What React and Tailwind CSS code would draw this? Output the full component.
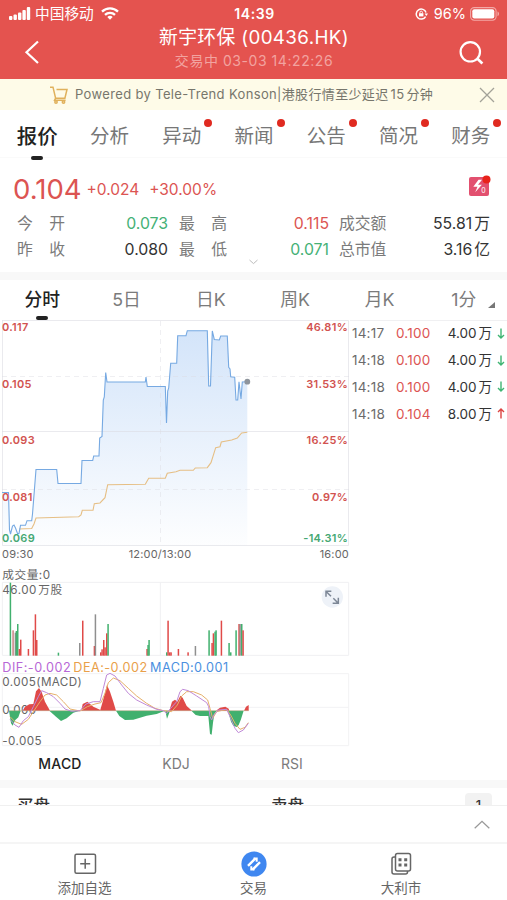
import React from 'react';

const tabs = [
  { name: '报价', active: true },
  { name: '分析' },
  { name: '异动', dot: true },
  { name: '新闻', dot: true },
  { name: '公告', dot: true },
  { name: '简况', dot: true },
  { name: '财务', dot: true },
];

const periods = ['分时', '5日', '日K', '周K', '月K', '1分'];

const ticks = [
  { time: '14:17', price: '0.100', vol: '4.00', up: false },
  { time: '14:18', price: '0.100', vol: '4.00', up: false },
  { time: '14:18', price: '0.100', vol: '4.00', up: false },
  { time: '14:18', price: '0.104', vol: '8.00', up: true },
];

const RED = '#e04a48';
const GREEN = '#41b06e';
const GRAY = '#8f8f8f';

const priceLine = '2,492.5 8.5,492.5 9.5,530 10.5,534 12.5,526 14,525 15.5,528 17.5,533.5 19,533.5 20.5,525.3 25.5,525.3 27,520.7 31.7,520.7 32.5,514 36,469.5 56.7,469.5 58,483.5 81,483.5 82,460.5 92.7,460.5 93.7,456 99,456 99.7,438 102,436.5 103.3,400 104.3,397 105.7,372.5 107,382 145.3,382 146,377 147.3,386.5 165.3,386.5 166.5,423 167.7,391 168.7,388 170.7,363.3 176.7,363.3 177.7,335.7 186,335.7 187.3,330.7 207.3,330.7 208.7,386 210.5,386 212.3,331 214.3,339.5 219.3,340 220.7,336 227.3,336 228.7,367.3 230,369 230.7,376.7 234.7,377.3 236,400 237.7,400 239,381.7 241,399 242.3,382 247.3,381.7';
const avgLine = '19,529 31.7,528.5 34,524 36,518 78.7,516.7 81,515 82.3,510.3 93,510.3 94.3,503.7 100,503 105,497.7 107.7,484.7 145.3,484.3 148.7,478.3 165.3,478.3 167.3,473.3 176,471.7 180,470.3 193.3,470.3 195.3,468 207.3,467.7 211,462.7 215.7,447.7 220,446.7 221.3,442 231.7,440 237.3,438 241.7,433 247.3,432.3';

// x, top, color
const bars = [
  [31, 68, GREEN], [39, 211, '#c98483'], [46, 218, GRAY], [49, 213, GREEN], [53, 192, GREEN], [58, 267, RED],
  [62, 239, RED], [85, 267, RED], [100, 211, RED], [106, 163, RED], [110, 240, RED], [175, 278, GREEN],
  [239, 249, GRAY], [248, 182, RED], [283, 258, RED], [286, 163, GRAY], [302, 277, RED], [306, 268, RED],
  [311, 240, RED], [315, 262, RED], [320, 220, RED], [324, 192, GREEN], [441, 267, RED], [444, 255, GREEN],
  [447, 240, GREEN], [500, 277, GREEN], [504, 182, RED], [509, 277, RED], [513, 277, RED], [535, 267, RED],
  [564, 277, RED], [586, 258, GRAY], [627, 211, GREEN], [636, 249, RED], [640, 220, RED], [645, 215, GREEN],
  [648, 211, GREEN], [664, 182, RED], [687, 249, GREEN], [692, 277, GREEN], [708, 211, GREEN], [717, 192, RED],
  [720, 192, GRAY], [725, 192, GREEN], [729, 211, RED],
];

const macdRed = [
  '68,452 75,440 88,433 100,432 108,394 117,384 125,396 135,425 150,452',
  '244,452 248,432 262,425 280,440 300,449 300,452',
  '300,452 308,425 321,375 330,395 340,425 348,452',
  '508,452 516,425 525,419 532,425 541,407 548,413 560,438 576,452',
  '648,452 660,443 676,440 686,446 688,452',
  '732,452 738,440 746,435 746,452',
];
const macdGreen = [
  '27,452 33,490 38,497 46,480 55,472 62,452',
  '148,452 168,470 183,483 200,475 220,458 240,452',
  '348,452 358,468 375,480 400,479 440,467 470,462 495,452',
  '496,452 501,476 510,452',
  '574,452 587,465 600,468 625,468 630,522 635,524 639,488 643,462 650,452',
  '684,452 693,485 700,497 710,501 716,495 723,478 731,452',
];
const difLine = '30,478 45,495 57,502 70,482 85,470 100,440 115,410 125,392 140,398 160,410 180,430 195,447 215,454 240,452 258,432 280,425 300,425 310,385 320,345 330,340 345,348 365,375 385,400 410,420 440,435 470,448 490,452 500,460 512,445 530,425 540,395 548,388 565,392 590,408 620,428 626,440 630,470 635,480 641,465 655,450 680,448 690,470 705,505 715,518 730,510 745,490';
const deaLine = '30,470 45,485 65,493 85,478 100,455 120,425 135,405 150,400 170,405 190,425 210,447 240,453 262,440 285,432 303,428 315,400 325,368 340,354 360,362 385,385 410,408 440,430 465,445 490,452 515,455 532,435 545,408 560,395 580,395 605,405 623,420 630,445 638,475 650,455 680,448 692,465 705,490 720,508 735,502 745,488';

const StatusBar = () => (
  <div className="flex h-7 items-center pl-[9px] pr-[7px] text-white">
    <div className="flex flex-1 items-center">
      <svg width="22" height="13" viewBox="0 0 22 13" fill="currentColor">
        <rect x="0" y="9" width="3.4" height="4" rx="1" />
        <rect x="4.5" y="7.5" width="3.4" height="5.5" rx="1" />
        <rect x="9" y="5.5" width="3.4" height="7.5" rx="1" />
        <rect x="13.4" y="3" width="3.4" height="10" rx="1" />
        <rect x="17.8" y="0" width="3.4" height="13" rx="1" />
      </svg>
      <span className="ml-[4px] text-[14.7px]">中国移动</span>
      <svg className="ml-[7px]" width="18" height="13" viewBox="0 0 18 13" fill="none" stroke="currentColor" strokeWidth="2.3">
        <path d="M1 4.6a11.4 11.4 0 0 1 16 0" />
        <path d="M4 7.9a7.2 7.2 0 0 1 10 0" />
        <path d="M9 12.8 6.3 10a3.8 3.8 0 0 1 5.4 0z" fill="currentColor" stroke="none" />
      </svg>
    </div>
    <span className="-mt-px text-[14px] font-semibold tracking-[0.6px]">14:39</span>
    <div className="flex flex-1 items-center justify-end">
      <svg width="14" height="12" viewBox="0 0 14 12" fill="none" stroke="currentColor" strokeWidth="1.5">
        <path d="M11 4.500A5 5 0 1 0 10.600 8.600" />
        <path d="M9.600 5.600h3.400l-1.700 2.400z" fill="currentColor" stroke="none" />
        <rect x="4" y="5.2" width="4.400" height="3.2" fill="currentColor" stroke="none" />
        <path d="M5 5.2V4.300a1.200 1.200 0 0 1 2.400 0v.9" strokeWidth=".9" />
      </svg>
      <span className="ml-[5px] text-[14.5px]">96%</span>
      <svg className="ml-[4px]" width="30" height="14" viewBox="0 0 30 14">
        <rect x=".6" y=".6" width="25.5" height="12.6" rx="3.6" fill="none" stroke="#f3a9a7" strokeWidth="1.1" />
        <rect x="2.3" y="2.3" width="22" height="9.2" rx="2" fill="#fff" />
        <path d="M27.5 4.6c2 .7 2 4 0 4.7z" fill="#f3a9a7" />
      </svg>
    </div>
  </div>
);

const Header = () => (
  <div className="h-[79px] bg-[#e4534f]">
    <StatusBar />
    <div className="flex h-[48px] items-center justify-between pl-[24px] pr-[23px] text-white">
      <svg width="25" height="24" viewBox="0 0 25 24" fill="none" stroke="currentColor" strokeWidth="2.2">
        <path d="M14 1.5 2.5 12.2 14 23" />
      </svg>
      <div className="flex flex-col items-center">
        <div className="-mt-[8px] text-[18.8px] leading-[26px] tracking-[0.35px]">新宇环保 (00436.HK)</div>
        <div className="-mt-px text-[14px] leading-[21px] tracking-[0.55px] text-[#f2a3a0]">交易中 03-03 14:22:26</div>
      </div>
      <svg width="25" height="25" viewBox="0 0 25 25" fill="none" stroke="currentColor" strokeWidth="2.2">
        <circle cx="11.3" cy="11.8" r="9.7" />
        <path d="m18.2 18.5 5.2 5" strokeWidth="2.6" />
      </svg>
    </div>
  </div>
);

const Notice = () => (
  <div className="flex h-[31px] items-center bg-[#fefbe8] pl-[50px] pr-[12px] text-[#77766c]">
    <svg width="18" height="18" viewBox="0 0 18 18" fill="none" stroke="#e0b15c" strokeWidth="1.5">
      <path d="M0 1.2h3l2.6 11h9.3L17 3.5H6.5M5.6 12.2l-1 2h11" />
      <circle cx="6" cy="16" r="1.2" />
      <circle cx="13.5" cy="16" r="1.2" />
    </svg>
    <span className="ml-[7px] flex-1 whitespace-nowrap text-[13px] tracking-[0.35px]">
      Powered by Tele-Trend Konson|港股行情至少延迟<span className="mx-[2px]">15</span>分钟
    </span>
    <svg width="16" height="16" viewBox="0 0 16 16" fill="none" stroke="#a3a298" strokeWidth="1.3">
      <path d="m1 1 14 14M15 1 1 15" />
    </svg>
  </div>
);

const NavTabs = () => (
  <div className="grid h-12 grid-cols-7 border-b border-[#fafafa] pl-px">
    {tabs.map(t => (
      <div key={t.name} className="flex flex-col items-center">
        <div className="relative mt-[11px] whitespace-nowrap leading-[31px]">
          <span className={t.active ? 'text-[20.500px] font-medium text-[#222]' : 'text-[19.5px] text-[#777]'}>{t.name}</span>
          {t.dot && <i className="absolute -right-[11px] -top-[2px] h-2 w-2 rounded-full bg-[#e02a20]" />}
        </div>
        {t.active && <div className="mt-[2px] h-[4px] w-3 rounded-full bg-[#222]" />}
      </div>
    ))}
  </div>
);

const Quote = () => (
  <div className="h-[114px] pl-[13px] pr-4 pt-[12px]">
    <div className="flex h-[37px] items-center text-[#dc5452]">
      <span className="text-[27.5px] leading-9">0.104</span>
      <span className="ml-[5px] mt-[2px] text-[15.5px]">+0.024</span>
      <span className="ml-[10px] mt-[2px] text-[15.5px]">+30.00%</span>
      <svg className="-mt-[5px] ml-auto" width="22" height="22" viewBox="0 0 22 22">
        <rect x="0" y="2" width="20" height="19" rx="2" fill="#e2506f" />
        <path d="m9.5 4.8-5.2 7h4.2l-2.3 5.5 6.7-7.6H9l4-4.9z" fill="#fff" />
        <text x="12.2" y="17.5" fontSize="7" fill="#fff">0</text>
        <circle cx="17.5" cy="4.5" r="4" fill="#e8231b" />
      </svg>
    </div>
    <div className="ml-[4px] mt-[4px] grid grid-cols-[48px_103px_11px_48px_102px_10px_60px_91px] text-[15.8px] leading-[26px] text-[#7b7b7b]">
      <span className="flex justify-between">今<span>开</span></span>
      <span className="text-right text-[#45b176]">0.073</span>
      <span />
      <span className="flex justify-between">最<span>高</span></span>
      <span className="text-right text-[#dc5452]">0.115</span>
      <span />
      <span>成交额</span>
      <span className="text-right text-[#333]">55.81<span className="ml-[2px]">万</span></span>
      <span className="flex justify-between">昨<span>收</span></span>
      <span className="text-right text-[#333]">0.080</span>
      <span />
      <span className="flex justify-between">最<span>低</span></span>
      <span className="text-right text-[#45b176]">0.071</span>
      <span />
      <span>总市值</span>
      <span className="text-right text-[#333]">3.16<span className="ml-[2px]">亿</span></span>
    </div>
    <svg className="-mt-[4px] ml-[236px]" width="9" height="6" viewBox="0 0 9 6" fill="none" stroke="#bbb">
      <path d="m.5 1 4 3.6 4-3.6" />
    </svg>
  </div>
);

const Periods = () => (
  <div className="grid h-10 grid-cols-6 pr-px">
    {periods.map((p, i) => (
      <div key={p} className="flex flex-col items-center">
        <div className="relative mt-[6px] whitespace-nowrap leading-7">
          <span className={i === 0 ? 'text-[17.8px] font-medium text-[#222]' : 'text-[17.8px] text-[#7b7b7b]'}>{p}</span>
          {i === 5 && (
            <svg className="absolute -right-[19px] bottom-[6px]" width="7" height="6" viewBox="0 0 7 6"><path d="M7 0v6H0z" fill="#777" /></svg>
          )}
        </div>
        {i === 0 && <div className="mt-[2px] h-[3.5px] w-3 rounded-full bg-[#222]" />}
      </div>
    ))}
  </div>
);

const PriceChart = () => (
  <svg className="block" width="350" height="240" viewBox="0 320 350 240">
    <defs>
      <linearGradient id="area" x1="0" y1="0" x2="0" y2="1">
        <stop offset="0" stopColor="#4a90e8" stopOpacity=".24" />
        <stop offset="1" stopColor="#4a90e8" stopOpacity=".01" />
      </linearGradient>
    </defs>
    <polygon points={`${priceLine} 247.3,546 2,546`} fill="url(#area)" />
    <g stroke="#dcdce2" strokeOpacity=".6" fill="none">
      <path d="M2 320.5H348.500V545.5H2.5V320.5M2 431.5H349" />
      <path d="M2 376.5H349M2 489.5H349M160.5 321V545" strokeDasharray="5 4" strokeOpacity=".45" />
    </g>
    <polyline points={avgLine} fill="none" stroke="#e6bf85" strokeWidth="1.1" />
    <polyline points={priceLine} fill="none" stroke="#76a9e2" strokeWidth="1.1" />
    <circle cx="247.3" cy="381.7" r="2.9" fill="#8e949c" />
    <g fontSize="11" fontWeight="600" fill="#d25350" letterSpacing=".3">
      <text x="2" y="330.5">0.117</text>
      <text x="2" y="387.5">0.105</text>
      <text x="2" y="444.3">0.093</text>
      <text x="2" y="501">0.081</text>
      <text x="2" y="542" fill="#45a873">0.069</text>
      <g textAnchor="end">
        <text x="348" y="330.5">46.81%</text>
        <text x="348" y="387.5">31.53%</text>
        <text x="348" y="444.3">16.25%</text>
        <text x="348" y="501">0.97%</text>
        <text x="348" y="542" fill="#45a873">-14.31%</text>
      </g>
    </g>
    <g fontSize="11" fill="#666" letterSpacing=".2">
      <text x="2" y="557.5">09:30</text>
      <text x="160" y="557.5" textAnchor="middle">12:00/13:00</text>
      <text x="349" y="557.5" textAnchor="end">16:00</text>
    </g>
  </svg>
);

// volume and MACD share one coordinate space, 3 units per pixel
const VolumeChart = () => (
  <svg className="block" width="350" height="96" viewBox="0 0 1050 288">
    <path d="M7 67H1046V286H7zM481 67V286" fill="none" stroke="#f0f0f2" strokeWidth="3" />
    {bars.map(([x, y, c]) => (
      <rect key={x} x={x - 2} y={y} width="4.5" height={287 - y} fill={c} />
    ))}
    <g fill="#666" fontSize="35">
      <text x="7" y="58" letterSpacing="1.5">成交量:0</text>
      <text x="7" y="103" letterSpacing="1.5">46.00<tspan dx="4">万股</tspan></text>
    </g>
    <circle cx="997" cy="111" r="32" fill="#eef2f8" />
    <g fill="none" stroke="#7d8796" strokeWidth="4.5">
      <path d="M978 110V94h16M979 95l14 14M1015 113v17h-17M1014 129l-14-14" />
    </g>
  </svg>
);

const MacdChart = () => (
  <svg className="block" width="350" height="94" viewBox="0 288 1050 282">
    <path d="M7 341H1046V557H7zM481 341V557M7 442H1046" fill="none" stroke="#f2f2f4" strokeWidth="3" />
    <g fill="#666" fontSize="35" letterSpacing="1.2">
      <text x="7" y="378">0.005(MACD)</text>
      <text x="7" y="461">0.000</text>
      <text x="7" y="554">-0.005</text>
    </g>
    {macdRed.map(p => <polygon key={p} points={p} fill={RED} />)}
    {macdGreen.map(p => <polygon key={p} points={p} fill={GREEN} />)}
    <path d="M27 452H746" stroke="#b9a57e" strokeWidth="1.5" />
    <polyline points={deaLine} fill="none" stroke="#e6b06a" strokeWidth="3" strokeLinejoin="round" />
    <polyline points={difLine} fill="none" stroke="#c08ad8" strokeWidth="3" strokeLinejoin="round" />
    <g fontSize="38" letterSpacing="1.4">
      <text x="7" y="337" fill="#b767d6">DIF:-0.002</text>
      <text x="220" y="337" fill="#e9a04a">DEA:-0.002</text>
      <text x="450" y="337" fill="#4a8fe0">MACD:0.001</text>
    </g>
  </svg>
);

const TickList = () => (
  <div className="flex-1 border-t border-[#f0f0f2]">
    {ticks.map((t, i) => (
      <div key={i} className="-mt-px mb-px flex h-[26.8px] items-center pl-[2px] pr-[2px] text-[13.5px] text-[#6b6b6b]">
        <span className="w-[44px] tracking-[0.2px]">{t.time}</span>
        <span className="tracking-[0.2px] text-[#dc5452]">{t.price}</span>
        <span className="ml-auto text-[#333]">{t.vol}<span className="ml-[2px]">万</span></span>
        <svg className="ml-[5px]" width="8" height="11" viewBox="0 0 8 11" fill="none" stroke={t.up ? '#dc4442' : '#3fb573'} strokeWidth="1.4">
          <path d={t.up ? 'M4 10.5V1M1 4l3-3 3 3' : 'M4 .5V10M1 7l3 3 3-3'} />
        </svg>
      </div>
    ))}
  </div>
);

const BottomNav = () => (
  <div className="flex h-[58px] border-t-2 border-[#f5f5f5] pt-[7px] text-[13.5px] leading-[20px] text-[#666]">
    <div className="flex w-[169px] flex-col items-center">
      <svg width="26" height="26" viewBox="0 0 26 26" fill="none" stroke="#666" strokeWidth="1.5">
        <rect x="3" y="3.2" width="20.5" height="19" rx="1.5" />
        <path d="M13.2 7.7v10M8.2 12.7h10" />
      </svg>
      <span className="mt-px">添加自选</span>
    </div>
    <div className="flex w-[169px] flex-col items-center">
      <svg width="26" height="26" viewBox="0 0 26 26">
        <circle cx="13" cy="13" r="12.6" fill="#3f87f0" />
        <g fill="none" stroke="#fff" strokeWidth="2.400">
          <path d="M7 14.800 14.500 7.300M11.500 18.700 19 11.200" />
          <path d="M12.500 7.600h3.200v3.200M13.500 18.400h-3.200v-3.200" strokeWidth="2" />
        </g>
      </svg>
      <span className="mt-px">交易</span>
    </div>
    <div className="flex w-[126px] flex-col items-center">
      <svg width="26" height="26" viewBox="0 0 26 26" fill="none" stroke="#666" strokeWidth="1.500">
        <rect x="7.500" y="2.500" width="15" height="17.500" rx="2" />
        <path d="M7.500 6H6a2 2 0 0 0-2 2v13a2 2 0 0 0 2 2h11.500a2 2 0 0 0 2-2v-1" />
        <path d="M10.500 8.700h3M16.200 8.700h3M10.500 13.900h3M16.200 13.900h3" strokeWidth="3" />
      </svg>
      <span className="mt-px">大利市</span>
    </div>
  </div>
);

const App = () => (
  <div className="h-[900px] w-[507px] overflow-hidden bg-white font-['Inter','Noto_Sans_CJK_SC',sans-serif]">
    <Header />
    <Notice />
    <NavTabs />
    <Quote />
    <div className="h-2 bg-[#f8f8f8]" />
    <Periods />
    <div className="flex h-[460px]">
      <div className="w-[350px]">
        <PriceChart />
        <VolumeChart />
        <MacdChart />
        <div className="grid h-[26px] grid-cols-3 items-center pl-[2px] text-center text-[14px] text-[#7b7b7b]">
          <span className="font-medium tracking-[0.2px] text-[#222]">MACD</span>
          <span>KDJ</span>
          <span>RSI</span>
        </div>
      </div>
      <TickList />
    </div>
    <div className="h-2 bg-[#f8f8f8]" />
    <div className="flex h-[17px] overflow-hidden pl-[17px] pr-[15px] text-[16.5px] font-medium leading-[24px] text-[#333]">
      <span className="mt-[6px] w-[254px]">买盘</span>
      <span className="mt-[6px] flex-1">卖盘</span>
      <span className="mt-[5px] h-6 w-[27px] rounded-sm bg-[#f2f2f2] text-center text-[13px]">1</span>
    </div>
    <div className="flex h-[37px] items-center justify-end border-t border-[#f0f0f0] pr-[17px]">
      <svg width="16" height="9" viewBox="0 0 16 9" fill="none" stroke="#999" strokeWidth="1.3">
        <path d="m.7 8.300 7.300-7 7.300 7" />
      </svg>
    </div>
    <BottomNav />
  </div>
);

export default App;
